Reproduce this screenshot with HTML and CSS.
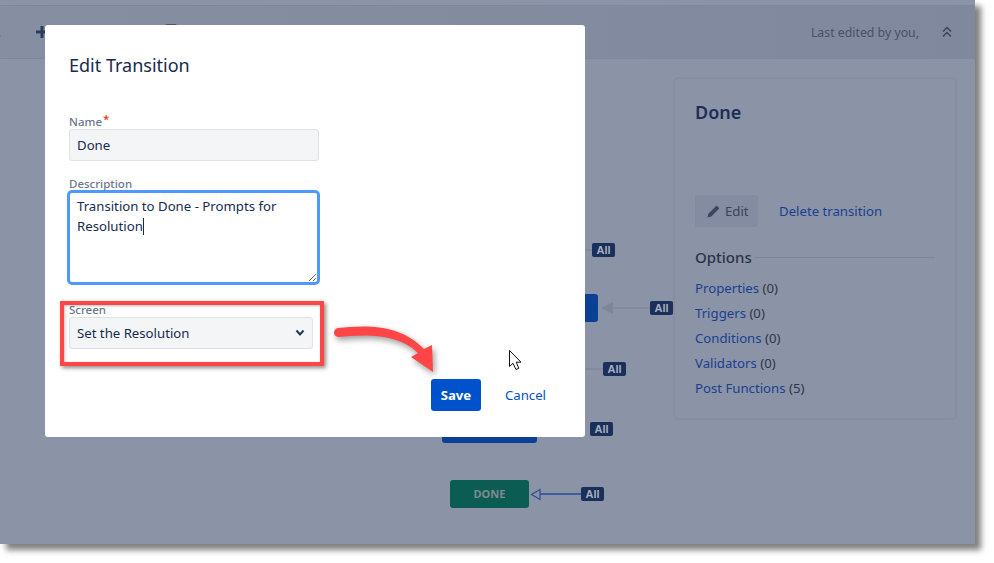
FILE: index.html
```html
<!DOCTYPE html>
<html lang="en">
<head>
    <meta charset="UTF-8">
    <title>Edit Transition</title>
    <link rel="stylesheet" href="styles.css">
</head>
<body>
    <div class="window">
        <div class="top-strip"></div>

        <div class="toolbar">
            <span class="cut-text">s</span>
            <svg class="plus" width="14" height="14" viewBox="0 0 14 14"><path d="M5.500 1h3v4.500H13v3H8.500V13h-3V8.500H1v-3h4.500z"/></svg>
            <span class="peek"></span>
            <span class="edited">Last edited by you,</span>
            <svg class="chevrons" width="12" height="12" viewBox="0 0 12 12"><path d="M2 5.500l4-4 4 4M2 10.500l4-4 4 4"/></svg>
        </div>

        <div class="main">
            <aside class="panel">
                <h2>Done</h2>
                <div class="panel-actions">
                    <button type="button" class="edit-btn">
                        <svg width="14" height="14" viewBox="0 0 14 14"><path d="M0.500 13.500l0.900-3.800 7.500-7.500a1 1 0 0 1 1.400 0l1.500 1.500a1 1 0 0 1 0 1.400l-7.500 7.500z"/></svg>
                        Edit
                    </button>
                    <a href="#" class="link">Delete transition</a>
                </div>
                <div class="options-head"><h3>Options</h3><span class="rule"></span></div>
                <ul class="options">
                    <li><a href="#" class="link">Properties</a> (0)</li>
                    <li><a href="#" class="link">Triggers</a> (0)</li>
                    <li><a href="#" class="link">Conditions</a> (0)</li>
                    <li><a href="#" class="link">Validators</a> (0)</li>
                    <li><a href="#" class="link">Post Functions</a> (5)</li>
                </ul>
            </aside>
        </div>

        <!-- workflow diagram, free canvas -->
        <div class="node node-a"></div>
        <div class="node node-b"></div>
        <div class="node node-done">DONE</div>

        <div class="line line-a"></div>
        <div class="line line-b"></div>
        <div class="line line-c"></div>
        <div class="line line-d"></div>
        <svg class="head head-b" width="12" height="14" viewBox="0 0 12 14"><path d="M0 7l12-6v12z"/></svg>
        <svg class="head head-done" width="11" height="13" viewBox="0 0 11 13"><path d="M1.500 6.500L10 1.500v10z"/></svg>

        <span class="all all-a">All</span>
        <span class="all all-b">All</span>
        <span class="all all-c">All</span>
        <span class="all all-d">All</span>
        <span class="all all-e">All</span>

        <div class="modal">
            <h1>Edit Transition</h1>

            <div class="field field-name">
                <label class="field-label">Name<span class="req">*</span></label>
                <input class="input" type="text" value="Done">
            </div>

            <div class="field field-desc">
                <label class="field-label">Description</label>
                <div class="desc">Transition to Done - Prompts for Resolution<span class="caret"></span></div>
            </div>

            <div class="field field-screen">
                <label class="field-label">Screen</label>
                <div class="select-wrap">
                    <select class="select">
                        <option>Set the Resolution</option>
                    </select>
                    <svg class="select-arrow" width="10" height="8" viewBox="0 0 10 8"><path d="M1.500 1.500L5 5.500L8.500 1.500"/></svg>
                </div>
            </div>

            <div class="modal-footer">
                <button type="button" class="save">Save</button>
                <a href="#" class="cancel">Cancel</a>
            </div>
        </div>

        <!-- screenshot annotations -->
        <div class="red-box"></div>
        <svg class="red-arrow" width="975" height="544" viewBox="0 0 975 544">
            <path d="M338 328C362 326 398 322 424 349L432 345L433 372L411 357L418 353C396 332 362 335 339 337A4.500 4.500 0 0 1 338 328Z"/>
        </svg>
        <svg class="cursor" width="16" height="22" viewBox="0 0 16 22">
            <path d="M1.500 1.500V17.500L5 14.300L8 20.500L10.800 19.300L8.200 13.200H13Z"/>
        </svg>
    </div>
</body>
</html>
```

FILE: styles.css
```css
* {
    box-sizing: border-box;
}

html,
body {
    height: 563px;
}

body {
    margin: 0;
    background: #ffffff;
    font-family: "Noto Sans", "Open Sans", sans-serif;
    font-size: 13.200px;
    color: #172b4d;
}

.window {
    position: relative;
    width: 975px;
    height: 544px;
    background: #8b93a6;
    box-shadow: 6px 6px 6px rgba(0, 0, 0, 0.5);
}

.top-strip {
    height: 6px;
    background: #8b93a6;
    border-bottom: 1px solid #7f879b;
}

.toolbar {
    display: flex;
    align-items: center;
    height: 53px;
    padding-right: 22px;
    overflow: hidden;
    background: linear-gradient(90deg, #868ea2, #7f889c);
    border-bottom: 1px solid #7f879b;
}

.cut-text {
    margin-left: -6px;
    font-size: 14px;
    color: #3b4a68;
}

.plus {
    margin-left: 34px;
    fill: #2b3d5f;
}

.peek {
    align-self: flex-start;
    width: 12px;
    height: 4px;
    margin: 18px 0 0 116px;
    border-radius: 2px;
    background: #4c566e;
}

.edited {
    margin-left: auto;
    font-size: 12.300px;
    color: #4a5164;
}

.chevrons {
    margin-left: 22px;
    fill: none;
    stroke: #3c4559;
    stroke-width: 1.500;
}

.main {
    display: flex;
    justify-content: flex-end;
    padding: 20px 20px 0 0;
}

.panel {
    width: 280px;
    height: 339px;
    padding: 20px;
    background: #8b93a6;
    border-radius: 3px;
    box-shadow: 0 0 3px rgba(60, 70, 95, 0.2);
}

.panel h2 {
    margin: 0;
    font-size: 18px;
    font-weight: 600;
    line-height: 26px;
    color: #1c2e56;
}

.panel-actions {
    display: flex;
    align-items: center;
    gap: 21px;
    margin-top: 70px;
}

.edit-btn {
    display: flex;
    align-items: center;
    gap: 4px;
    width: 63px;
    height: 32px;
    padding: 0 0 0 12px;
    border: none;
    border-radius: 3px;
    background: #838ca0;
    font: inherit;
    color: #3b4459;
}

.edit-btn svg {
    fill: #3b4762;
}

.link {
    color: #1b3f90;
    text-decoration: none;
}

.options-head {
    display: flex;
    align-items: center;
    gap: 3px;
    margin-top: 19px;
}

.options-head h3 {
    margin: 0;
    font-size: 15px;
    font-weight: 500;
    line-height: 22px;
    color: #2a3348;
}

.rule {
    flex: 1;
    height: 1px;
    background: #7c859b;
}

.options {
    margin: 8px 0 0;
    padding: 0;
    list-style: none;
    color: #2d3649;
}

.options li {
    height: 25px;
    line-height: 25px;
}

/* diagram */
.node {
    position: absolute;
    border-radius: 3px;
    background: #0b4194;
}

.node-a {
    left: 500px;
    top: 294px;
    width: 98px;
    height: 28px;
}

.node-b {
    left: 442px;
    top: 415px;
    width: 95px;
    height: 28px;
}

.node-done {
    left: 450px;
    top: 480px;
    width: 79px;
    height: 28px;
    background: #0b5c53;
    font-size: 11px;
    font-weight: 700;
    line-height: 28px;
    text-align: center;
    color: #7f8a92;
}

.line {
    position: absolute;
    height: 2px;
    background: #808aa0;
}

.line-a {
    left: 560px;
    top: 249px;
    width: 32px;
}

.line-b {
    left: 610px;
    top: 307px;
    width: 42px;
}

.line-c {
    left: 570px;
    top: 368px;
    width: 34px;
}

.line-d {
    left: 540px;
    top: 493px;
    width: 42px;
    background: #3d5f9f;
}

.head {
    position: absolute;
}

.head-b {
    left: 601px;
    top: 301px;
    fill: #7c869b;
}

.head-done {
    left: 530px;
    top: 488px;
    fill: #8b93a6;
    stroke: #2c4f94;
    stroke-width: 1.200;
}

.all {
    position: absolute;
    width: 23px;
    height: 14px;
    border-radius: 2px;
    background: #1a2f5a;
    font-family: "Liberation Sans", sans-serif;
    font-size: 11px;
    font-weight: 700;
    line-height: 14px;
    text-align: center;
    color: #a9b1c0;
}

.all-a {
    left: 592px;
    top: 243px;
}

.all-b {
    left: 650px;
    top: 301px;
}

.all-c {
    left: 603px;
    top: 362px;
}

.all-d {
    left: 590px;
    top: 422px;
}

.all-e {
    left: 581px;
    top: 487px;
}

/* modal */
.modal {
    position: absolute;
    left: 45px;
    top: 25px;
    width: 540px;
    height: 412px;
    padding: 26px 24px 0;
    background: #ffffff;
    border-radius: 3px;
}

.modal h1 {
    margin: 0;
    font-size: 18px;
    font-weight: 400;
    line-height: 28px;
    color: #172b4d;
}

.field-label {
    display: block;
    font-size: 11.500px;
    font-weight: 500;
    line-height: 14px;
    color: #6b778c;
}

.req {
    position: relative;
    top: -3px;
    margin-left: 1px;
    color: #de350b;
}

.field-name {
    margin-top: 36px;
}

.input,
.select {
    display: block;
    height: 32px;
    border: 1px solid #dfe1e6;
    border-radius: 3px;
    background-color: #f4f5f7;
    padding: 0 7px;
    font: inherit;
    color: #172b4d;
    outline: none;
}

.input {
    width: 250px;
}

.field-desc {
    margin-top: 16px;
    margin-left: -2px;
}

.field-desc .field-label {
    margin-left: 2px;
    margin-bottom: -1px;
}

.desc {
    width: 253px;
    height: 95px;
    padding: 3px 7px;
    border: 3px solid #4c9aff;
    border-radius: 5px;
    line-height: 20px;
    overflow: auto;
    resize: both;
    color: #172b4d;
}

.caret {
    display: inline-block;
    width: 1px;
    height: 17px;
    vertical-align: -4px;
    background: #172b4d;
}

.field-screen {
    margin-top: 18px;
}

.select-wrap {
    position: relative;
    width: 244px;
}

.select {
    width: 100%;
    appearance: none;
}

.select-arrow {
    position: absolute;
    right: 8px;
    top: 12px;
    fill: none;
    stroke: #253858;
    stroke-width: 2;
}

.modal-footer {
    display: flex;
    align-items: center;
    justify-content: flex-end;
    gap: 24px;
    margin: 30px 15px 0 0;
}

.save {
    width: 50px;
    height: 32px;
    border: none;
    border-radius: 3px;
    background: #0052cc;
    font: inherit;
    font-weight: 700;
    color: #ffffff;
}

.cancel {
    color: #0052cc;
    text-decoration: none;
}

/* annotations */
.red-box {
    position: absolute;
    left: 60px;
    top: 301px;
    width: 264px;
    height: 65px;
    border: 4px solid #ff4545;
    box-shadow: 2px 2px 4px rgba(0, 0, 0, 0.45), inset 1px 1px 3px rgba(0, 0, 0, 0.25);
}

.red-arrow {
    position: absolute;
    left: 0;
    top: 0;
    fill: #ff4545;
    filter: drop-shadow(2px 3px 3px rgba(0, 0, 0, 0.4));
}

.cursor {
    position: absolute;
    left: 508px;
    top: 349px;
    fill: #ffffff;
    stroke: #111111;
    stroke-width: 1;
}
```
